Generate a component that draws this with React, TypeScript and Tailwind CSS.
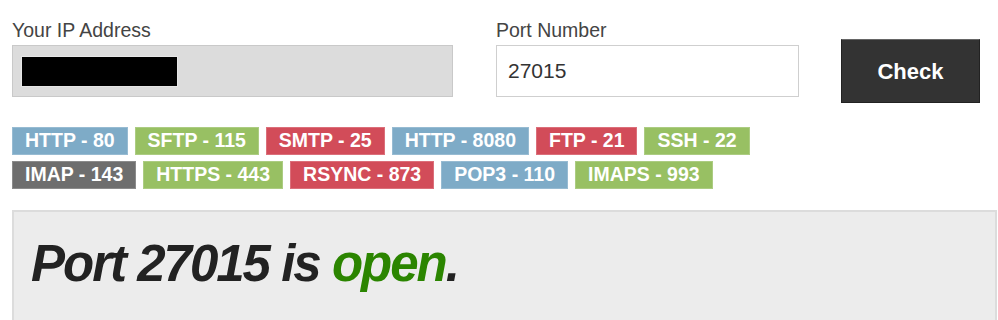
const ports: { label: string; color: string }[][] = [
  [
    { label: 'HTTP - 80', color: 'bg-[#7eabc7]' },
    { label: 'SFTP - 115', color: 'bg-[#98c063]' },
    { label: 'SMTP - 25', color: 'bg-[#d24c59]' },
    { label: 'HTTP - 8080', color: 'bg-[#7eabc7]' },
    { label: 'FTP - 21', color: 'bg-[#d24c59]' },
    { label: 'SSH - 22', color: 'bg-[#98c063]' },
  ],
  [
    { label: 'IMAP - 143', color: 'bg-[#6e6e6e]' },
    { label: 'HTTPS - 443', color: 'bg-[#98c063]' },
    { label: 'RSYNC - 873', color: 'bg-[#d24c59]' },
    { label: 'POP3 - 110', color: 'bg-[#7eabc7]' },
    { label: 'IMAPS - 993', color: 'bg-[#98c063]' },
  ],
];

export default function App() {
  return (
    <div className="w-[998px] h-[320px] overflow-hidden bg-white font-['Liberation_Sans',Arial,sans-serif]">
      <div className="flex items-start pl-3 pt-[16px]">
        <div className="w-[441px]">
          <div className="text-[19.5px] leading-[29px] text-[#444]">Your IP Address</div>
          <div className="h-[52px] bg-[#dcdcdc] border border-[#c9c9c9] flex items-center pl-2">
            <div className="w-[157px] h-[31px] bg-black border border-[#e6e6e6]" />
          </div>
        </div>
        <div className="w-[303px] ml-[43px]">
          <div className="text-[19.5px] leading-[29px] text-[#444]">Port Number</div>
          <div className="h-[52px] bg-white border border-[#cfcfcf] flex items-center pl-[11px] text-[21px] text-[#333]">
            27015
          </div>
        </div>
        <button className="ml-[42px] mt-[23px] w-[139px] h-[64px] bg-[#333] border border-[#222] border-t-[#666] text-white font-bold text-[22px]">
          Check
        </button>
      </div>

      <div className="pl-3 mt-[24px] flex flex-col gap-[6px]">
        {ports.map((row, i) => (
          <div key={i} className="flex gap-[7px]">
            {row.map((p) => (
              <span
                key={p.label}
                className={`${p.color} h-[28px] px-[12px] flex items-center text-white font-bold text-[19.5px] border border-white/20`}
              >
                {p.label}
              </span>
            ))}
          </div>
        ))}
      </div>

      <div className="ml-3 mr-px mt-[21px] h-[120px] bg-[#ececec] border-2 border-[#dcdcdc] pl-[17px] pt-[22px]">
        <div className="italic font-bold text-[51px] leading-[60px] tracking-[-2px] text-[#222]">
          Port 27015 is <span className="text-[#2b8500]">open</span>.
        </div>
      </div>
    </div>
  );
}
